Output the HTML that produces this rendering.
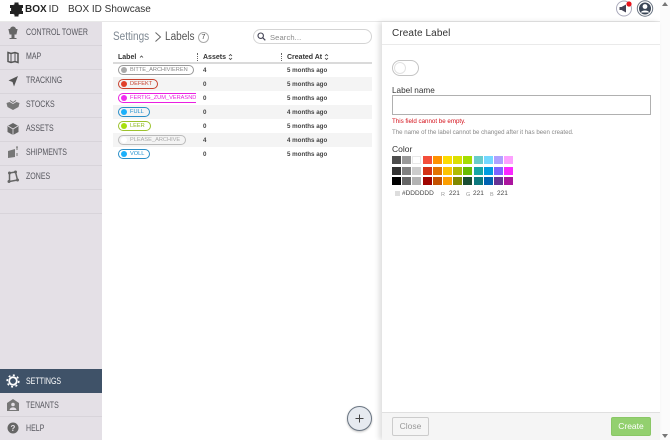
<!DOCTYPE html>
<html><head><meta charset="utf-8"><style>
*{box-sizing:border-box}
html{margin:0;padding:0;width:670px;height:440px;overflow:hidden;background:#fff}
body{margin:0;padding:0;width:670px;height:440px;overflow:hidden;background:#fff;font-family:"Liberation Sans",sans-serif;filter:blur(.35px)}
.a{position:absolute;white-space:nowrap}
#side{left:0;top:22px;width:102px;height:418px;background:#e4e0e6}
.nav{left:0;width:102px;height:24px;border-bottom:1px solid #d8d4da;font-size:9px;color:#55555c;line-height:21px;padding-left:26px}
.nav b{font-weight:normal;display:inline-block;transform:scaleX(.78);transform-origin:0 50%}
.nav svg{position:absolute;left:6px;top:3px}
.h{font-size:7px;font-weight:bold;color:#333;top:54px;line-height:8px}
.row{left:113px;width:259px;height:14px}
.tag{position:absolute;left:5px;top:2px;height:10px;border:1px solid;border-radius:5px;font-size:5.65px;line-height:9px;padding-left:11px;padding-right:5px;overflow:hidden}
.tag i{position:absolute;left:1.500px;top:.75px;width:6.500px;height:6.500px;border-radius:50%}
.v{position:absolute;font-size:6.200px;font-weight:bold;color:#444;top:4px;line-height:8px}
.sw{position:absolute;width:9px;height:8px}
.srt{position:absolute;top:53px}
.cond{display:inline-block;transform:scaleX(.87);transform-origin:0 50%}
</style></head><body>
<svg class="a" style="left:9px;top:2px" width="16" height="15" viewBox="0 0 16 15"><circle cx="7.500" cy="7.500" r="5.500" fill="#222"/><g fill="#222"><rect x="5.500" y="0.500" width="4" height="3"/><rect x="5.500" y="11.500" width="4" height="3"/><rect x="1" y="3" width="3" height="3"/><rect x="11" y="3" width="3" height="3"/><rect x="1" y="9" width="3" height="3"/><rect x="11" y="9" width="3" height="3"/></g></svg>
<div class="a" style="left:25px;top:3px;font-size:10px;line-height:14px;font-weight:bold;color:#222">BOX<span style="font-weight:normal;color:#333;margin-left:2px">ID</span></div>
<div class="a" style="left:68px;top:2.500px;font-size:10px;line-height:14px;color:#333">BOX ID Showcase</div>
<svg class="a" style="left:615px;top:0" width="40" height="19" viewBox="0 0 40 19"><circle cx="9" cy="8.500" r="7.500" fill="#fff" stroke="#aab" stroke-width="1"/><path d="M4.500 7h2l4.500-2.500v8L6.500 10h-2z" fill="#445"/><circle cx="14" cy="4" r="2.600" fill="#e8131b"/><circle cx="30" cy="8.500" r="7.700" fill="#fff" stroke="#6a7482" stroke-width="1"/><circle cx="30" cy="8.500" r="6" fill="#3a4656"/><circle cx="30" cy="6.500" r="2.400" fill="#fff"/><path d="M25.800 12.500c1-2.600 7.400-2.600 8.400 0z" fill="#fff"/></svg>
<div class="a" style="left:0;top:21px;width:660px;height:1px;background:#e8e8e8"></div>
<div class="a" style="left:660px;top:0;width:10px;height:440px;background:#fbfbfb"></div>
<div class="a" style="left:662px;top:2px;width:0;height:0;border:3px solid transparent;border-bottom:4px solid #777;border-top:0"></div>
<div class="a" style="left:662px;top:434px;width:0;height:0;border:3px solid transparent;border-top:4px solid #777;border-bottom:0"></div>

<div class="a" id="side"></div>
<div class="a nav" style="top:22px"><svg width="14" height="16" viewBox="0 0 14 16"><path d="M3 4.500h8L10 9H4zM6 9h2v4H6zM3.500 13.500h7" fill="#666" stroke="#666"/><path d="M4 4.500a3 3 0 0 1 6 0z" fill="#666"/></svg><b>CONTROL TOWER</b></div>
<div class="a nav" style="top:46px"><svg width="14" height="16" viewBox="0 0 14 16"><path d="M2 3.500l3 1 4-1 3 1v9l-3-1-4 1-3-1z" fill="none" stroke="#555" stroke-width="1.500"/><path d="M5 4.500v9M9 3.500v9" stroke="#555"/></svg><b>MAP</b></div>
<div class="a nav" style="top:70px"><svg width="14" height="16" viewBox="0 0 14 16"><path d="M12 3L2.500 7.500l4 1.500 1.500 4.500z" fill="#555"/></svg><b>TRACKING</b></div>
<div class="a nav" style="top:94px"><svg width="14" height="16" viewBox="0 0 14 16"><path d="M0.500 6l3-1 3.500 2 3.500-2 3 1-1 4-5.500 3-5.500-3z" fill="#777"/><path d="M4 3.500l3 2 3-2" stroke="#777" fill="none"/></svg><b>STOCKS</b></div>
<div class="a nav" style="top:118px"><svg width="14" height="16" viewBox="0 0 14 16"><path d="M7 2l5.500 3v6L7 14l-5.500-3V5z" fill="#666"/><path d="M2 5l5 3 5-3M7 8v6" stroke="#e4e0e6" fill="none" stroke-width=".8"/></svg><b>ASSETS</b></div>
<div class="a nav" style="top:142px"><svg width="14" height="16" viewBox="0 0 14 16"><path d="M2 6l7-2v8l-7 1z" fill="#777"/><path d="M11 2v3M10 2h2M11 8v3" stroke="#777"/></svg><b>SHIPMENTS</b></div>
<div class="a nav" style="top:166px"><svg width="14" height="16" viewBox="0 0 14 16"><path d="M3.500 4l6-1 2 8-8 1.500z" fill="none" stroke="#666" stroke-width="1.500"/><circle cx="3.500" cy="4" r="1.500" fill="#666"/><circle cx="9.500" cy="3" r="1.500" fill="#666"/><circle cx="11.500" cy="11" r="1.500" fill="#666"/><circle cx="3" cy="12.500" r="1.500" fill="#666"/></svg><b>ZONES</b></div>
<div class="a nav" style="top:190px"></div>

<div class="a nav" style="top:369px;background:#3f5268;color:#fff;border:0;height:24px;line-height:24px"><svg style="top:4px" width="14" height="16" viewBox="0 0 14 16"><circle cx="7" cy="8" r="3.800" fill="none" stroke="#fff" stroke-width="1.800"/><circle cx="7" cy="8" r="5.800" fill="none" stroke="#fff" stroke-width="1.600" stroke-dasharray="2 2.500"/></svg><b>SETTINGS</b></div>
<div class="a nav" style="top:393px;height:24px;line-height:24px"><svg style="top:4px" width="14" height="16" viewBox="0 0 14 16"><path d="M7 2l6 4v8H1V6z" fill="#777"/><circle cx="7" cy="7.500" r="1.800" fill="#e4e0e6"/><path d="M3.500 13c.5-3.500 6.500-3.500 7 0z" fill="#e4e0e6"/></svg><b>TENANTS</b></div>
<div class="a nav" style="top:417px;height:23px;border:0;line-height:22px"><svg style="top:3px" width="14" height="16" viewBox="0 0 14 16"><circle cx="7" cy="8" r="5.500" fill="#666"/><text x="7" y="11" font-size="8" font-weight="bold" text-anchor="middle" fill="#e4e0e6" font-family="Liberation Sans">?</text></svg><b>HELP</b></div>

<div class="a" style="left:113px;top:29.500px;font-size:11.500px;line-height:14px;color:#7d8791"><span class="cond">Settings</span></div>
<svg class="a" style="left:154px;top:32px" width="8" height="10" viewBox="0 0 8 10"><path d="M1.500 0.500L6.500 5 1.500 9.500" fill="none" stroke="#666" stroke-width="1"/></svg>
<div class="a" style="left:165px;top:29.500px;font-size:11.500px;line-height:14px;color:#555"><span class="cond">Labels</span></div>
<div class="a" style="left:198px;top:32px;width:11px;height:11px;border:1px solid #aaa;border-radius:50%;font-size:7px;line-height:9px;text-align:center;color:#444">7</div>
<div class="a" style="left:253px;top:29px;width:119px;height:15px;border:1px solid #d4d4d4;border-radius:8px"></div>
<svg class="a" style="left:257px;top:32px" width="9" height="9" viewBox="0 0 9 9"><circle cx="3.700" cy="3.700" r="2.700" fill="none" stroke="#445" stroke-width="1.100"/><path d="M5.700 5.700L8.300 8.300" stroke="#445" stroke-width="1.200"/></svg>
<div class="a" style="left:270px;top:32px;font-size:7.600px;line-height:11px;color:#8a8a8a;letter-spacing:.1px">Search...</div>

<div class="a h" style="left:118px">Label</div>
<svg class="a srt" style="left:139px" width="5" height="8" viewBox="0 0 5 8"><path d="M1 4.500L2.500 3 4 4.500" fill="none" stroke="#444" stroke-width=".8"/></svg>
<div class="a h" style="left:203px">Assets</div>
<svg class="a srt" style="left:228px" width="5" height="8" viewBox="0 0 5 8"><path d="M1 3L2.500 1.500 4 3M1 5L2.500 6.500 4 5" fill="none" stroke="#444" stroke-width=".8"/></svg>
<div class="a h" style="left:287px">Created At</div>
<svg class="a srt" style="left:324px" width="5" height="8" viewBox="0 0 5 8"><path d="M1 3L2.500 1.500 4 3M1 5L2.500 6.500 4 5" fill="none" stroke="#444" stroke-width=".8"/></svg>
<div class="a" style="left:197px;top:53px;width:2px;height:8px;border-left:1.500px dotted #666"></div>
<div class="a" style="left:281px;top:53px;width:2px;height:8px;border-left:1.500px dotted #666"></div>
<div class="a" style="left:113px;top:62px;width:259px;height:2px;background:#dadada"></div>

<div class="a row" style="top:63px"><div class="tag" style="color:#888;border-color:#999">BITTE_ARCHIVIEREN<i style="background:#aaa"></i></div><span class="v" style="left:90px">4</span><span class="v" style="left:174px">5 months ago</span></div>
<div class="a row" style="top:77px;background:#f4f4f4"><div class="tag" style="color:#c8432f;border-color:#c8432f">DEFEKT<i style="background:#e0412b"></i></div><span class="v" style="left:90px">0</span><span class="v" style="left:174px">5 months ago</span></div>
<div class="a row" style="top:91px"><div class="tag" style="color:#e91fe0;border-color:#e91fe0;width:78px;border-right:0;border-radius:5px 0 0 5px">FERTIG_ZUM_VERASND<i style="background:#f02cf0"></i></div><span class="v" style="left:90px">0</span><span class="v" style="left:174px">5 months ago</span></div>
<div class="a row" style="top:105px;background:#f4f4f4"><div class="tag" style="color:#1c8fd0;border-color:#2a8fc8">FULL<i style="background:#1cb0fa"></i></div><span class="v" style="left:90px">0</span><span class="v" style="left:174px">4 months ago</span></div>
<div class="a row" style="top:119px"><div class="tag" style="color:#8cb81a;border-color:#9cc22c">LEER<i style="background:#a8e010"></i></div><span class="v" style="left:90px">0</span><span class="v" style="left:174px">5 months ago</span></div>
<div class="a row" style="top:133px;background:#f4f4f4"><div class="tag" style="color:#aaa;border-color:#bbb">PLEASE_ARCHIVE<i style="background:#fff"></i></div><span class="v" style="left:90px">4</span><span class="v" style="left:174px">4 months ago</span></div>
<div class="a row" style="top:147px"><div class="tag" style="color:#1c8fd0;border-color:#2a8fc8">VOLL<i style="background:#1cb0fa"></i></div><span class="v" style="left:90px">0</span><span class="v" style="left:174px">5 months ago</span></div>

<div class="a" style="left:347px;top:406px;width:25px;height:25px;border-radius:50%;background:#e6eaf0;border:1px solid #6a7582;box-shadow:0 1px 2px rgba(0,0,0,.25)"></div>
<svg class="a" style="left:355px;top:414px" width="9" height="9" viewBox="0 0 9 9"><path d="M4.500 0.500v8M0.500 4.500h8" stroke="#444" stroke-width="1"/></svg>

<div class="a" style="left:382px;top:22px;width:278px;height:418px;background:#fff;box-shadow:-3px 0 5px rgba(0,0,0,.13)"></div>
<div class="a" style="left:392px;top:27px;font-size:10px;line-height:14px;color:#333;letter-spacing:.1px">Create Label</div>
<div class="a" style="left:382px;top:44px;width:278px;height:1px;background:#eaeaea"></div>
<div class="a" style="left:392px;top:60px;width:27px;height:16px;border:1px solid #c4c4c4;border-radius:8px;background:#fff"></div>
<div class="a" style="left:394px;top:62px;width:12px;height:12px;border:1px solid #e2e2e2;border-radius:50%"></div>
<div class="a" style="left:392px;top:85px;font-size:8.200px;line-height:11px;color:#333">Label name</div>
<div class="a" style="left:392px;top:95px;width:259px;height:20px;border:1px solid #b0b0b0;background:#fff"></div>
<div class="a" style="left:392px;top:117px;font-size:6.200px;line-height:9px;color:#d4101a">This field cannot be empty.</div>
<div class="a" style="left:392px;top:128px;font-size:6.100px;line-height:9px;color:#888">The name of the label cannot be changed after it has been created.</div>
<div class="a" style="left:392px;top:144px;font-size:8.500px;line-height:11px;color:#333">Color</div>

<div class="a" style="left:392px;top:156px;width:122px;height:30px">
<div class="sw" style="left:0;top:0;background:#4d4d4d"></div><div class="sw" style="left:10px;top:0;background:#999"></div><div class="sw" style="left:20px;top:0;background:#fff;border:1px solid #e8e8e8"></div><div class="sw" style="left:31px;top:0;background:#f44e3b"></div><div class="sw" style="left:41px;top:0;background:#fe9200"></div><div class="sw" style="left:51px;top:0;background:#fcdc00"></div><div class="sw" style="left:61px;top:0;background:#dbdf00"></div><div class="sw" style="left:71px;top:0;background:#a4dd00"></div><div class="sw" style="left:82px;top:0;background:#68ccca"></div><div class="sw" style="left:92px;top:0;background:#73d8ff"></div><div class="sw" style="left:102px;top:0;background:#aea1ff"></div><div class="sw" style="left:112px;top:0;background:#fda1ff"></div>
<div class="sw" style="left:0;top:11px;background:#333"></div><div class="sw" style="left:10px;top:11px;background:#808080"></div><div class="sw" style="left:20px;top:11px;background:#ccc"></div><div class="sw" style="left:31px;top:11px;background:#d33115"></div><div class="sw" style="left:41px;top:11px;background:#e27300"></div><div class="sw" style="left:51px;top:11px;background:#fcc400"></div><div class="sw" style="left:61px;top:11px;background:#b0bc00"></div><div class="sw" style="left:71px;top:11px;background:#68bc00"></div><div class="sw" style="left:82px;top:11px;background:#16a5a5"></div><div class="sw" style="left:92px;top:11px;background:#009ce0"></div><div class="sw" style="left:102px;top:11px;background:#7b64ff"></div><div class="sw" style="left:112px;top:11px;background:#fa28ff"></div>
<div class="sw" style="left:0;top:21px;background:#000"></div><div class="sw" style="left:10px;top:21px;background:#666"></div><div class="sw" style="left:20px;top:21px;background:#b3b3b3"></div><div class="sw" style="left:31px;top:21px;background:#9f0500"></div><div class="sw" style="left:41px;top:21px;background:#c45100"></div><div class="sw" style="left:51px;top:21px;background:#fb9e00"></div><div class="sw" style="left:61px;top:21px;background:#808900"></div><div class="sw" style="left:71px;top:21px;background:#194d33"></div><div class="sw" style="left:82px;top:21px;background:#0c797d"></div><div class="sw" style="left:92px;top:21px;background:#0062b1"></div><div class="sw" style="left:102px;top:21px;background:#653294"></div><div class="sw" style="left:112px;top:21px;background:#ab149e"></div>
</div>
<div class="a" style="left:395px;top:191px;width:5px;height:5px;background:#ddd"></div>
<div class="a" style="left:402px;top:189px;font-size:6.500px;line-height:9px;color:#444">#DDDDDD</div>
<div class="a" style="left:441px;top:191px;font-size:5.500px;line-height:8px;color:#999">R</div>
<div class="a" style="left:449px;top:189px;font-size:6.500px;line-height:9px;color:#444">221</div>
<div class="a" style="left:466px;top:191px;font-size:5.500px;line-height:8px;color:#999">G</div>
<div class="a" style="left:473px;top:189px;font-size:6.500px;line-height:9px;color:#444">221</div>
<div class="a" style="left:490px;top:191px;font-size:5.500px;line-height:8px;color:#999">B</div>
<div class="a" style="left:497px;top:189px;font-size:6.500px;line-height:9px;color:#444">221</div>

<div class="a" style="left:382px;top:412px;width:278px;height:28px;background:#f5f5f5;border-top:1px solid #e0e0e0"></div>
<div class="a" style="left:392px;top:417px;width:37px;height:19px;border:1px solid #ccc;border-radius:2px;background:#f5f5f5;font-size:8.500px;line-height:17px;text-align:center;color:#999">Close</div>
<div class="a" style="left:611px;top:417px;width:40px;height:19px;border-radius:2px;background:#93d06f;border:1px solid #8ac766;font-size:8.500px;line-height:17px;text-align:center;color:#fff">Create</div>
</body></html>
